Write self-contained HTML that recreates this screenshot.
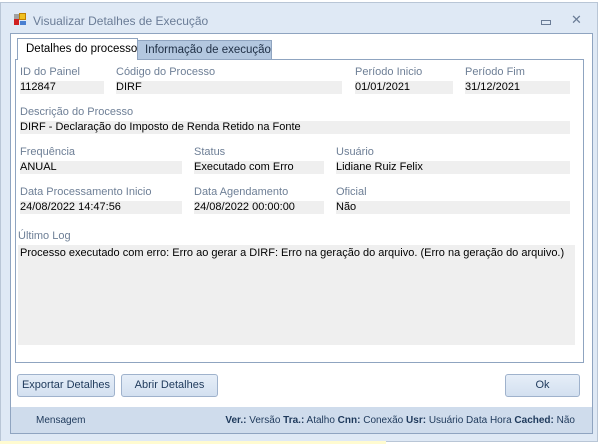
<!DOCTYPE html>
<html><head><meta charset="utf-8"><style>
*{margin:0;padding:0;box-sizing:border-box}
body{width:603px;height:444px;background:#fff;position:relative;overflow:hidden;font-family:"Liberation Sans",sans-serif;font-size:11px;color:#000}
.a{position:absolute;white-space:nowrap}
.lbl{position:absolute;color:#6e7f96;font-size:11px;white-space:nowrap}
.box{position:absolute;background:#efefef;height:13px;font-size:11px;line-height:13px;white-space:nowrap}
.btn{position:absolute;height:23px;border:1px solid #9fb2cc;border-radius:3px;background:linear-gradient(#e6eef8,#d3e0f0);text-align:center;line-height:21px;color:#1e395b;font-size:11px}
</style></head><body>
<div class="a" style="left:0;top:2px;width:598px;height:440px;background:#dfe9f5;border:1px solid #b9c6d6"></div>
<div class="a" style="left:0;top:441px;width:386px;height:3px;background:#fffbd0"></div>
<div class="a" style="left:14px;top:14px;width:6px;height:6px;background:#a0a0a0"></div>
<div class="a" style="left:19px;top:13px;width:7px;height:7px;background:#f0c020;border:1px solid #c08000"></div>
<div class="a" style="left:14px;top:19px;width:5px;height:6px;background:#d02020"></div>
<div class="a" style="left:20px;top:21px;width:6px;height:4px;background:#4a7fd0"></div>
<div class="a" style="left:33px;top:14px;color:#6a7c96;font-size:12px">Visualizar Detalhes de Execução</div>
<div class="a" style="left:541px;top:20px;width:10px;height:5px;border:1px solid #6a7c96"></div>
<div class="a" style="left:571px;top:12px;color:#6a7c96;font-size:13px">✕</div>
<div class="a" style="left:10px;top:33px;width:583px;height:401px;background:#fff;border:1px solid #8fa4c0"></div>
<div class="a" style="left:137px;top:40px;width:135px;height:20px;background:#b3c7df;border:1px solid #8fa4c0;color:#1e2e44;font-size:11.5px;padding:3px 0 0 7px">Informação de execução</div>
<div class="a" style="left:15px;top:59px;width:569px;height:304px;border:1px solid #8fa4c0;background:#fff"></div>
<div class="a" style="left:17px;top:38px;width:121px;height:22px;background:#fff;border:1px solid #8fa4c0;border-bottom:none;font-size:11.5px;padding:4px 0 0 8px">Detalhes do processo</div>
<div class="lbl" style="left:20px;top:66px">ID do Painel</div>
<div class="box" style="left:20px;top:81px;width:84px">112847</div>
<div class="lbl" style="left:116px;top:66px">Código do Processo</div>
<div class="box" style="left:116px;top:81px;width:226px">DIRF</div>
<div class="lbl" style="left:355px;top:66px">Período Inicio</div>
<div class="box" style="left:355px;top:81px;width:98px">01/01/2021</div>
<div class="lbl" style="left:465px;top:66px">Período Fim</div>
<div class="box" style="left:465px;top:81px;width:105px">31/12/2021</div>
<div class="lbl" style="left:20px;top:106px">Descrição do Processo</div>
<div class="box" style="left:20px;top:121px;width:550px">DIRF - Declaração do Imposto de Renda Retido na Fonte</div>
<div class="lbl" style="left:20px;top:146px">Frequência</div>
<div class="box" style="left:20px;top:161px;width:162px">ANUAL</div>
<div class="lbl" style="left:194px;top:146px">Status</div>
<div class="box" style="left:194px;top:161px;width:130px">Executado com Erro</div>
<div class="lbl" style="left:336px;top:146px">Usuário</div>
<div class="box" style="left:336px;top:161px;width:234px">Lidiane Ruiz Felix</div>
<div class="lbl" style="left:20px;top:186px">Data Processamento Inicio</div>
<div class="box" style="left:20px;top:201px;width:162px">24/08/2022 14:47:56</div>
<div class="lbl" style="left:194px;top:186px">Data Agendamento</div>
<div class="box" style="left:194px;top:201px;width:130px">24/08/2022 00:00:00</div>
<div class="lbl" style="left:336px;top:186px">Oficial</div>
<div class="box" style="left:336px;top:201px;width:234px">Não</div>
<div class="lbl" style="left:18px;top:230px">Último Log</div>
<div class="a" style="left:18px;top:245px;width:557px;height:100px;background:#efefef;padding:2px 0 0 2px;font-size:11px">Processo executado com erro: Erro ao gerar a DIRF: Erro na geração do arquivo. (Erro na geração do arquivo.)</div>
<div class="btn" style="left:17px;top:374px;width:98px">Exportar Detalhes</div>
<div class="btn" style="left:121px;top:374px;width:97px">Abrir Detalhes</div>
<div class="btn" style="left:505px;top:374px;width:75px">Ok</div>
<div class="a" style="left:11px;top:407px;width:581px;height:26px;background:#cfdcec"></div>
<div class="a" style="left:36px;top:415px;font-size:10px;color:#1e395b">Mensagem</div>
<div class="a" style="right:28px;top:415px;font-size:10px;color:#1e395b"><b>Ver.:</b> Versão <b>Tra.:</b> Atalho <b>Cnn:</b> Conexão <b>Usr:</b> Usuário Data Hora <b>Cached:</b> Não</div>
</body></html>
